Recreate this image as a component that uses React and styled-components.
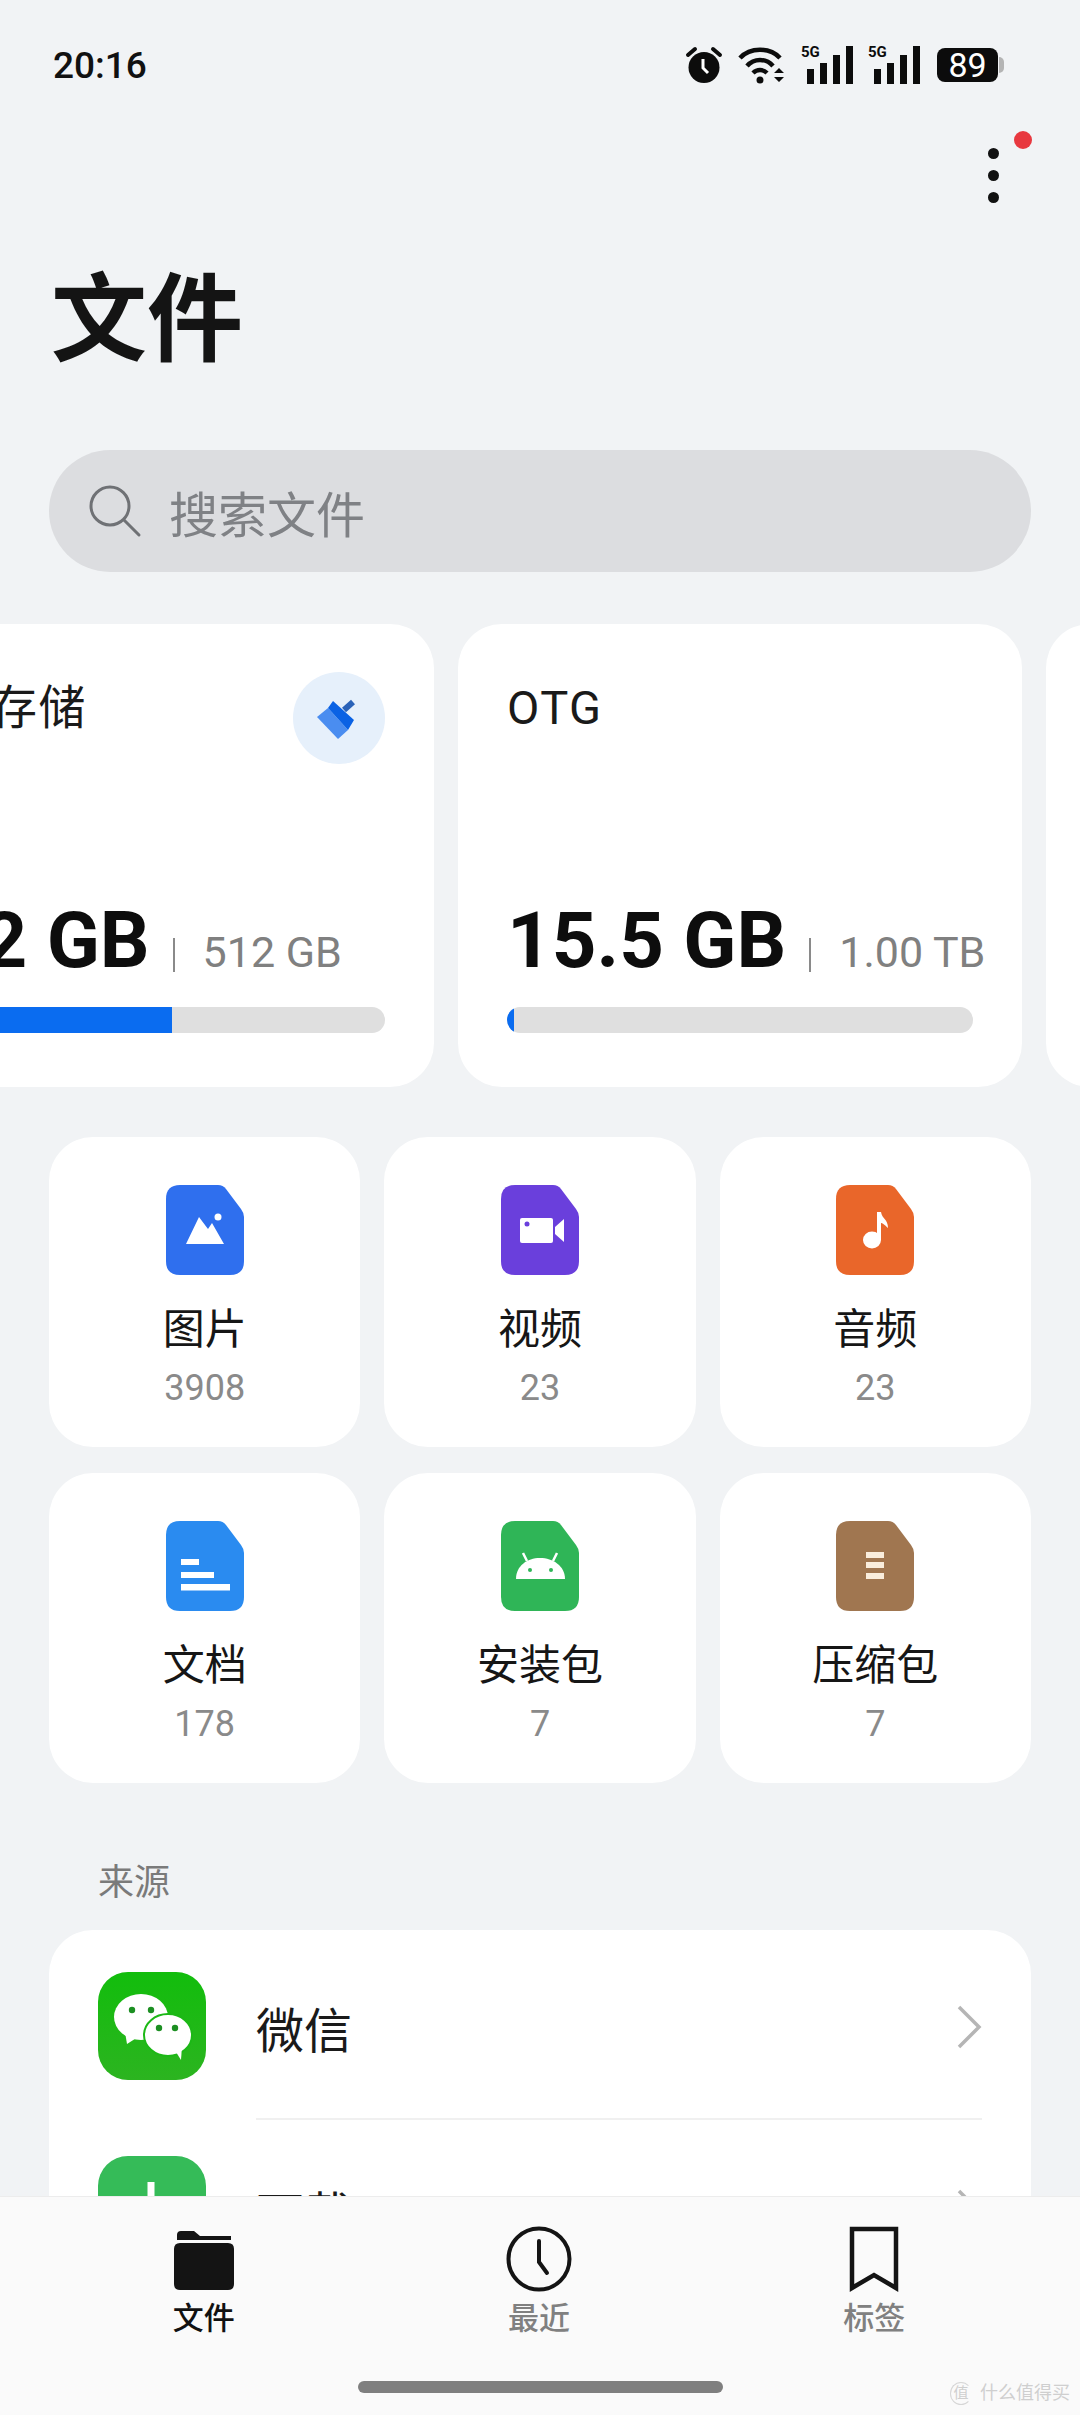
import React from "react";
import styled, { createGlobalStyle } from "styled-components";

const FONT = `Roboto, "Noto Sans CJK SC", sans-serif`;

const Global = createGlobalStyle`
  html, body { margin: 0; padding: 0; background: #f1f3f5; }
  * { box-sizing: border-box; }
`;

const Page = styled.div`
  position: relative;
  width: 1080px;
  height: 2415px;
  display: flex;
  flex-direction: column;
  overflow: hidden;
  background: #f1f3f5;
  font-family: ${FONT};
  color: #111;
`;
const Main = styled.main`
  flex: 1;
  min-height: 0;
  overflow: hidden;
`;
const StatusBar = styled.div`
  height: 130px;
  padding: 0 82px 0 53px;
  display: flex;
  align-items: center;
  justify-content: space-between;
`;
const Time = styled.span`
  font-size: 37px;
  font-weight: 500;
`;
const StatusIcons = styled.div`
  display: flex;
  align-items: center;
  gap: 15px;
`;
const Battery = styled.div`
  position: relative;
  width: 61px;
  height: 34px;
  margin-left: 2px;
  border-radius: 8px;
  background: #0c0c0c;
  color: #fff;
  font-size: 34px;
  line-height: 34px;
  text-align: center;
  &::after {
    content: "";
    position: absolute;
    right: -6px;
    top: 9px;
    width: 5px;
    height: 16px;
    border-radius: 0 5px 5px 0;
    background: #b4b4b4;
  }
`;
const ActionBar = styled.div`
  height: 90px;
  padding-right: 81px;
  display: flex;
  justify-content: flex-end;
  align-items: center;
`;
const MoreButton = styled.div`
  position: relative;
  width: 11px;
  display: flex;
  flex-direction: column;
  gap: 11px;
`;
const Dot = styled.i`
  display: block;
  width: 11px;
  height: 11px;
  border-radius: 50%;
  background: #111;
`;
const Badge = styled.i`
  position: absolute;
  left: 26px;
  top: -17px;
  width: 18px;
  height: 18px;
  border-radius: 50%;
  background: #e8383f;
`;
const Title = styled.h1`
  margin: 0;
  height: 195px;
  padding-left: 51px;
  font-size: 96px;
  font-weight: 700;
  line-height: 200px;
  color: #141414;
`;
const SearchBar = styled.div`
  margin: 35px 49px 0;
  height: 122px;
  border-radius: 61px;
  background: #dcdde0;
  display: flex;
  align-items: center;
  gap: 27px;
  padding-left: 37px;
  color: #7f8185;
  font-size: 49px;
`;
const Carousel = styled.div`
  margin-top: 52px;
  overflow: hidden;
`;
const Track = styled.div`
  display: flex;
  gap: 24px;
  margin-left: -156px;
  width: max-content;
`;
const StorageCard = styled.section`
  width: ${(p) => p.$width}px;
  height: 463px;
  flex-shrink: 0;
  padding: 48px 49px 54px 49px;
  border-radius: 44px;
  background: #fff;
  display: flex;
  flex-direction: column;
`;
const StorageHead = styled.div`
  display: flex;
  justify-content: space-between;
  align-items: flex-start;
  height: 92px;
`;
const StorageName = styled.span`
  font-size: 47px;
  line-height: 72px;
  letter-spacing: 1.5px;
  color: #1a1a1a;
`;
const CleanButton = styled.div`
  width: 92px;
  height: 92px;
  border-radius: 50%;
  background: #e6f0fb;
  display: flex;
  align-items: center;
  justify-content: center;
`;
const Usage = styled.div`
  margin-top: auto;
  margin-bottom: 21px;
  display: flex;
  align-items: baseline;
  white-space: nowrap;
`;
const Used = styled.span`
  flex-shrink: 0;
  font-size: 78px;
  line-height: 90px;
  font-weight: 700;
  color: #0d0d0d;
`;
const Divider = styled.i`
  flex-shrink: 0;
  display: inline-block;
  width: 2px;
  height: 34px;
  margin: 0 28px 0 23px;
  background: #8a8a8a;
  transform: translateY(5px);
`;
const Total = styled.span`
  flex-shrink: 0;
  font-size: 43px;
  color: #808080;
`;
const Bar = styled.div`
  height: 26px;
  border-radius: 13px;
  background: #dfdfdf;
  overflow: hidden;
`;
const BarFill = styled.div`
  height: 100%;
  background: #0a6cf0;
`;
const Grid = styled.div`
  margin: 50px 49px 0;
  display: grid;
  grid-template-columns: repeat(3, 1fr);
  gap: 26px 24px;
`;
const CategoryCard = styled.div`
  height: 310px;
  padding-top: 48px;
  border-radius: 44px;
  background: #fff;
  display: flex;
  flex-direction: column;
  align-items: center;
`;
const CategoryName = styled.div`
  margin-top: 27px;
  font-size: 42px;
  line-height: 56px;
  color: #161616;
`;
const CategoryCount = styled.div`
  margin-top: 8px;
  font-size: 36px;
  line-height: 44px;
  color: #8a8a8a;
`;
const SectionLabel = styled.div`
  margin: 75px 0 22px 98px;
  font-size: 36px;
  line-height: 50px;
  color: #7a7a7a;
`;
const SourceList = styled.div`
  margin: 0 49px;
  padding: 0 49px;
  border-radius: 44px 44px 0 0;
  background: #fff;
`;
const SourceRow = styled.div`
  height: 184px;
  padding-top: 8px;
  display: flex;
  align-items: center;
  gap: 50px;
`;
const SourceBody = styled.div`
  position: relative;
  flex: 1;
  height: 100%;
  padding-top: 2px;
  display: flex;
  align-items: center;
  justify-content: space-between;
  font-size: 48px;
  color: #1a1a1a;
  &::after {
    content: "";
    display: ${(p) => (p.$divided ? "block" : "none")};
    position: absolute;
    left: 0;
    right: 0;
    bottom: -6px;
    height: 2px;
    background: #f0f0f0;
  }
`;
const BottomNav = styled.nav`
  height: 219px;
  flex-shrink: 0;
  background: #fafafa;
  border-top: 1px solid #ececec;
  display: flex;
  flex-direction: column;
  align-items: center;
`;
const Tabs = styled.div`
  width: 100%;
  padding: 29px 38px 0 36px;
  display: grid;
  grid-template-columns: repeat(3, 1fr);
`;
const Tab = styled.div`
  display: flex;
  flex-direction: column;
  align-items: center;
  gap: 7px;
  font-size: 31px;
  line-height: 40px;
  font-weight: 500;
  color: ${(p) => (p.$active ? "#111" : "#808080")};
`;
const HomeBar = styled.div`
  margin-top: 42px;
  width: 365px;
  height: 12px;
  border-radius: 6px;
  background: #7f7f7f;
`;
const Watermark = styled.div`
  position: absolute;
  right: 10px;
  bottom: 10px;
  display: flex;
  align-items: center;
  gap: 8px;
  font-size: 18px;
  line-height: 24px;
  color: #cfcfcf;
`;
const WatermarkSeal = styled.span`
  width: 22px;
  height: 23px;
  border-radius: 50%;
  border: 1px solid #d6d6d6;
  border-right-color: transparent;
  font-size: 15px;
  line-height: 21px;
  text-align: center;
`;
const NetworkTag = styled.span`
  position: absolute;
  left: 0;
  top: -2px;
  font-size: 15px;
  line-height: 18px;
  font-weight: 700;
  color: #0c0c0c;
`;
const SignalWrap = styled.div`
  position: relative;
  width: 52px;
  height: 40px;
`;

const AlarmIcon = () => (
  <svg width="38" height="38" viewBox="0 0 38 38">
    <circle cx="19" cy="21.5" r="15.5" fill="#0c0c0c" />
    <path d="M3 9 L10 3 M35 9 L28 3" stroke="#0c0c0c" strokeWidth="4" strokeLinecap="round" />
    <path d="M18 13 V22 L23 27" stroke="#fff" strokeWidth="3" fill="none" />
  </svg>
);
const WifiIcon = () => (
  <svg width="48" height="38" viewBox="0 0 48 38" fill="none" stroke="#0c0c0c" strokeWidth="4.5">
    <path d="M2 12 C12 1 32 1 42 12" />
    <path d="M9 20 C16 12 28 12 35 20" />
    <path d="M15 27 C19 23 25 23 29 27" />
    <circle cx="22" cy="34" r="3.5" fill="#0c0c0c" stroke="none" />
    <path d="M36 27 L41 22 L46 27 Z M36 31 H46 L41 36 Z" fill="#0c0c0c" stroke="none" />
  </svg>
);
const SignalIcon = () => (
  <SignalWrap>
    <NetworkTag>5G</NetworkTag>
    <svg width="52" height="40" viewBox="0 0 52 40">
      <rect x="6" y="24" width="7" height="15" fill="#0c0c0c" />
      <rect x="19" y="18" width="7" height="21" fill="#0c0c0c" />
      <rect x="32" y="10" width="7" height="29" fill="#0c0c0c" />
      <rect x="45" y="1" width="7" height="38" fill="#0c0c0c" />
    </svg>
  </SignalWrap>
);
const SearchIcon = () => (
  <svg width="56" height="56" viewBox="0 0 56 56" fill="none" stroke="#6f7175" strokeWidth="3" strokeLinecap="round">
    <circle cx="24" cy="23" r="19" />
    <path d="M38 37 L53 52" />
  </svg>
);
const BroomIcon = () => (
  <svg width="44" height="44" viewBox="0 0 44 44">
    <path d="M0 21 L11 12 L31 34 L21 43 Z" fill="#4a8df0" />
    <path d="M11 12 L16 5 L37 24 L31 34 Z" fill="#0a62e4" />
    <path d="M27 14 L36 6" stroke="#2a62b8" strokeWidth="6" />
  </svg>
);

const FileIcon = ({ color, children }) => (
  <svg width="78" height="90" viewBox="0 0 78 90">
    <path
      d="M14 0 H52 Q57 0 60 4 L75 24 Q78 28 78 32 V76 Q78 90 64 90 H14 Q0 90 0 76 V14 Q0 0 14 0 Z"
      fill={color}
    />
    {children}
  </svg>
);
const picture = (
  <>
    <path d="M20 59 L33 32 L42 44 L46 38 L58 59 Z" fill="#fff" />
    <circle cx="52" cy="32" r="3.5" fill="#fff" />
  </>
);
const video = (
  <>
    <rect x="19" y="33" width="33" height="25" rx="2" fill="#fff" />
    <path d="M54 42 L63 34 V57 L54 49 Z" fill="#fff" />
    <circle cx="26" cy="39" r="2.5" fill="#6a3fdc" />
  </>
);
const music = (
  <>
    <ellipse cx="36" cy="55" rx="9" ry="8.5" fill="#fff" />
    <path d="M41 55 V27 H45 C46 34 52 34 52 43 C48 39 46 38 45 38 V55 Z" fill="#fff" />
  </>
);
const doc = (
  <>
    <rect x="15" y="38" width="18" height="6" fill="#fff" />
    <rect x="15" y="51" width="33" height="6" fill="#fff" />
    <rect x="15" y="63" width="49" height="6.5" fill="#fff" />
  </>
);
const android = (
  <>
    <path d="M15 58 C15 45 26 37 39 37 C52 37 64 45 64 58 Z" fill="#fff" />
    <path d="M26 40 L22 32 M52 40 L56 32" stroke="#fff" strokeWidth="2.5" />
    <circle cx="29" cy="49" r="2" fill="#2fb557" />
    <circle cx="50" cy="49" r="2" fill="#2fb557" />
  </>
);
const zip = (
  <>
    <rect x="30" y="31" width="18" height="6" fill="#f9eddc" />
    <rect x="30" y="41" width="18" height="6" fill="#f9eddc" />
    <rect x="30" y="52" width="18" height="6" fill="#f9eddc" />
  </>
);

const WeChatIcon = () => (
  <svg width="108" height="108" viewBox="0 0 108 108">
    <defs>
      <linearGradient id="wechatBg" x1="0" y1="0" x2="0" y2="1">
        <stop offset="0" stopColor="#12bd0c" />
        <stop offset="1" stopColor="#2cb420" />
      </linearGradient>
    </defs>
    <rect width="108" height="108" rx="30" fill="url(#wechatBg)" />
    <ellipse cx="43" cy="45" rx="27" ry="23" fill="#fff" />
    <path d="M27 60 L29 72 L40 65 Z" fill="#fff" />
    <ellipse cx="70" cy="63" rx="24" ry="21" fill="#fff" stroke="#1cb816" strokeWidth="2" />
    <path d="M78 80 L83 88 L84 74 Z" fill="#fff" />
    <circle cx="34" cy="38" r="3.2" fill="#1c8f22" />
    <circle cx="53" cy="38" r="3.2" fill="#1c8f22" />
    <circle cx="61" cy="56" r="3.2" fill="#1c8f22" />
    <circle cx="77" cy="56" r="3.2" fill="#1c8f22" />
  </svg>
);
const DownloadIcon = () => (
  <svg width="108" height="108" viewBox="0 0 108 108">
    <rect width="108" height="108" rx="30" fill="#35bb58" />
    <path d="M53 26 V68 M35 52 L53 70 L71 52" stroke="#fff" strokeWidth="7" fill="none" />
    <path d="M30 82 H76" stroke="#fff" strokeWidth="7" />
  </svg>
);
const Chevron = () => (
  <svg width="26" height="44" viewBox="0 0 26 44" fill="none" stroke="#b5b5b5" strokeWidth="3.5">
    <path d="M3 2 L23 22 L3 42" />
  </svg>
);
const FolderIcon = () => (
  <svg width="62" height="66" viewBox="0 0 62 66">
    <path d="M4 9 Q4 5 8 5 H21 L27 10 H58 V14 H4 Z" fill="#141414" />
    <path d="M1 23 Q1 17 7 17 H55 Q61 17 61 23 V58 Q61 64 55 64 H7 Q1 64 1 58 Z" fill="#141414" />
  </svg>
);
const ClockIcon = () => (
  <svg width="66" height="66" viewBox="0 0 66 66" fill="none" stroke="#141414" strokeWidth="4">
    <circle cx="33" cy="33" r="30.5" />
    <path d="M33 15 V36 L41 47" strokeLinecap="round" />
  </svg>
);
const BookmarkIcon = () => (
  <svg width="50" height="66" viewBox="0 0 50 66" fill="none" stroke="#141414" strokeWidth="4.5">
    <path d="M3 3 H47 V62 L25 49 L3 62 Z" />
  </svg>
);

const categories = [
  { name: "图片", count: "3908", color: "#2f6fee", glyph: picture },
  { name: "视频", count: "23", color: "#6a3fdc", glyph: video },
  { name: "音频", count: "23", color: "#e9662a", glyph: music },
  { name: "文档", count: "178", color: "#2a8bf0", glyph: doc },
  { name: "安装包", count: "7", color: "#2fb557", glyph: android },
  { name: "压缩包", count: "7", color: "#a07650", glyph: zip },
];

export default function App() {
  return (
    <Page>
      <Global />
      <Main>
        <StatusBar>
          <Time>20:16</Time>
          <StatusIcons>
            <AlarmIcon />
            <WifiIcon />
            <SignalIcon />
            <SignalIcon />
            <Battery>89</Battery>
          </StatusIcons>
        </StatusBar>
        <ActionBar>
          <MoreButton>
            <Dot />
            <Dot />
            <Dot />
            <Badge />
          </MoreButton>
        </ActionBar>
        <Title>文件</Title>
        <SearchBar>
          <SearchIcon />
          搜索文件
        </SearchBar>
        <Carousel>
          <Track>
            <StorageCard $width={590}>
              <StorageHead>
                <StorageName>内部存储</StorageName>
                <CleanButton>
                  <BroomIcon />
                </CleanButton>
              </StorageHead>
              <Usage>
                <Used>272 GB</Used>
                <Divider />
                <Total>512 GB</Total>
              </Usage>
              <Bar>
                <BarFill style={{ width: "56.8%" }} />
              </Bar>
            </StorageCard>
            <StorageCard $width={564}>
              <StorageHead>
                <StorageName>OTG</StorageName>
              </StorageHead>
              <Usage>
                <Used>15.5 GB</Used>
                <Divider />
                <Total>1.00 TB</Total>
              </Usage>
              <Bar>
                <BarFill style={{ width: "1.6%" }} />
              </Bar>
            </StorageCard>
            <StorageCard $width={564} />
          </Track>
        </Carousel>
        <Grid>
          {categories.map((c) => (
            <CategoryCard key={c.name}>
              <FileIcon color={c.color}>{c.glyph}</FileIcon>
              <CategoryName>{c.name}</CategoryName>
              <CategoryCount>{c.count}</CategoryCount>
            </CategoryCard>
          ))}
        </Grid>
        <SectionLabel>来源</SectionLabel>
        <SourceList>
          <SourceRow>
            <WeChatIcon />
            <SourceBody $divided>
              微信
              <Chevron />
            </SourceBody>
          </SourceRow>
          <SourceRow>
            <DownloadIcon />
            <SourceBody>
              下载
              <Chevron />
            </SourceBody>
          </SourceRow>
        </SourceList>
      </Main>
      <BottomNav>
        <Tabs>
          <Tab $active>
            <FolderIcon />
            文件
          </Tab>
          <Tab>
            <ClockIcon />
            最近
          </Tab>
          <Tab>
            <BookmarkIcon />
            标签
          </Tab>
        </Tabs>
        <HomeBar />
      </BottomNav>
      <Watermark>
        <WatermarkSeal>值</WatermarkSeal>
        什么值得买
      </Watermark>
    </Page>
  );
}
